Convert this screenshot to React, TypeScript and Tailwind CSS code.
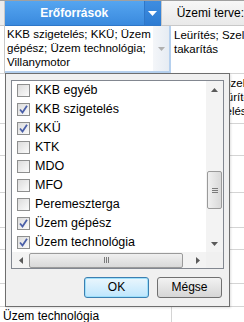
import { Fragment } from 'react';

const items = [
    { label: 'KKB egyéb', checked: false },
    { label: 'KKB szigetelés', checked: true },
    { label: 'KKÜ', checked: true },
    { label: 'KTK', checked: false },
    { label: 'MDO', checked: false },
    { label: 'MFO', checked: false },
    { label: 'Peremeszterga', checked: false },
    { label: 'Üzem gépész', checked: true },
    { label: 'Üzem technológia', checked: true },
];

const Check = ({ checked }: { checked: boolean }) => (
    <span className="flex h-[13px] w-[13px] shrink-0 items-center justify-center border border-[#8e8f8f] bg-gradient-to-br from-[#dcdcdc] to-[#fbfbfb]">
        {checked && (
            <svg width="9" height="9" viewBox="0 0 9 9">
                <path d="M1 4.5 L3.5 7.5 L8 0.8" fill="none" stroke="#4a5fa8" strokeWidth="1.8" />
            </svg>
        )}
    </span>
);

const Arrow = ({ dir }: { dir: 'up' | 'down' | 'left' | 'right' }) => {
    const d = {
        up: 'M0 4 L3.5 0 L7 4 Z',
        down: 'M0 0 L7 0 L3.5 4 Z',
        left: 'M4 0 L4 7 L0 3.5 Z',
        right: 'M0 0 L0 7 L4 3.5 Z',
    }[dir];
    const vert = dir === 'up' || dir === 'down';
    return (
        <svg width={vert ? 7 : 4} height={vert ? 4 : 7} viewBox={vert ? '0 0 7 4' : '0 0 4 7'}>
            <path d={d} fill="#5a5a5a" />
        </svg>
    );
};

const Grip = ({ vertical }: { vertical: boolean }) => (
    <span className={vertical ? 'flex flex-col gap-[1px]' : 'flex gap-[1px]'}>
        {[0, 1, 2].map((i) => (
            <span key={i} className={vertical ? 'h-[1px] w-[6px] bg-[#7a7a7a]' : 'h-[6px] w-[1px] bg-[#7a7a7a]'} />
        ))}
    </span>
);

const App = () => {
    return (
        <div
            className="relative h-[322px] w-[244px] overflow-hidden bg-white text-[11px] leading-[14px] text-black"
            style={{ fontFamily: '"Liberation Sans", Arial, sans-serif' }}
        >
            {/* header */}
            <div className="flex h-[26px] border-t border-[#a0a0a0]">
                <div className="w-[5px] border-b border-r border-[#c8c8c8] bg-[#ececec]" />
                <div className="flex w-[148px] items-center justify-center border-b border-[#2f77c8] bg-gradient-to-b from-[#55a5f0] to-[#3a8ade] text-[12px] font-bold text-white">
                    Erőforrások
                </div>
                <div className="flex w-[18px] items-center justify-center border-b border-l border-[#2f77c8] bg-gradient-to-b from-[#3f8de0] to-[#2c7bd2]">
                    <svg width="9" height="5" viewBox="0 0 9 5">
                        <path d="M0 0 L9 0 L4.5 5 Z" fill="#fff" />
                    </svg>
                </div>
                <div className="flex flex-1 items-center border-b border-l border-[#c8c8c8] bg-gradient-to-b from-[#f7f7f7] to-[#e9e9e9] pl-[15px] text-[12px] whitespace-nowrap">
                    Üzemi terve:
                </div>
            </div>

            {/* first row */}
            <div className="flex h-[47px]">
                <div className="w-[5px] border-r border-[#c8c8c8]" />
                <div className="flex w-[166px] border-r-2 border-b-2 border-[#b5d0ee]">
                    <div className="flex-1 overflow-hidden pl-[2px] pt-[1px] text-[11.5px] whitespace-nowrap">
                        KKB szigetelés; KKÜ; Üzem
                        <br />
                        gépész; Üzem technológia;
                        <br />
                        Villanymotor
                    </div>
                    <div className="flex w-[16px] items-center justify-center bg-gradient-to-r from-[#f4f6f9] to-[#e6ecf3]">
                        <svg width="7" height="4" viewBox="0 0 7 4">
                            <path d="M0 0 L7 0 L3.5 4 Z" fill="#b0b0b0" />
                        </svg>
                    </div>
                </div>
                <div className="flex-1 overflow-hidden pl-[3px] pt-[2px] text-[11.5px] whitespace-nowrap">
                    Leürítés; Szellőzés
                    <br />
                    takarítás
                </div>
            </div>

            {/* rows behind the popup */}
            <div className="flex h-[50px] border-t border-[#d4d4d4]">
                <div className="w-[5px]" />
                <div className="w-[167px] border-r border-[#d4d4d4]" />
                <div className="flex-1 overflow-hidden pl-[3px] pt-[2px] text-[11.5px] whitespace-nowrap">
                    Leürítés; Szellőzés
                    <br />
                    Kenés; Leürítés
                    <br />
                    Anyagkezelés
                </div>
            </div>
            {[32, 37, 35, 22, 34, 23].map((h, i) => (
                <div key={i} className="flex border-t border-[#d4d4d4]" style={{ height: h }}>
                    <div className="w-[5px]" />
                    <div className="w-[167px] border-r border-[#d4d4d4]" />
                    <div className="flex-1" />
                </div>
            ))}
            <div className="flex h-[20px] border-t border-[#d4d4d4]">
                <div className="w-[172px] border-r border-[#d4d4d4] pl-[3px] pt-[2px] text-[12px] whitespace-nowrap">Üzem technológia</div>
                <div className="flex-1" />
            </div>

            {/* popup */}
            <div className="absolute left-[5px] top-[73px] flex h-[234px] w-[225px] flex-col border border-[#6e6e6e] bg-[#f0f0f0] text-[12px] leading-[15px] shadow-[1px_1px_2px_rgba(0,0,0,0.12)]">
                <div className="mx-[5px] mt-[6px] flex h-[189px] flex-col border border-[#828790] bg-white">
                    <div className="flex flex-1">
                        <div className="flex flex-1 flex-col">
                            {items.map((it) => (
                                <Fragment key={it.label}>
                                    <div className="flex h-[19px] items-center gap-[5px] pl-[5px] text-[12.5px] whitespace-nowrap">
                                        <Check checked={it.checked} />
                                        <span>{it.label}</span>
                                    </div>
                                </Fragment>
                            ))}
                        </div>
                        <div className="flex w-[17px] flex-col items-center bg-[#f3f3f3]">
                            <div className="flex h-[17px] w-full items-center justify-center">
                                <Arrow dir="up" />
                            </div>
                            <div className="flex-1" />
                            <div className="flex h-[38px] w-[15px] items-center justify-center rounded-[2px] border border-[#9a9a9a] bg-gradient-to-r from-[#f0f0f0] to-[#d9d9d9]">
                                <Grip vertical />
                            </div>
                            <div className="h-[26px]" />
                            <div className="flex h-[17px] w-full items-center justify-center">
                                <Arrow dir="down" />
                            </div>
                        </div>
                    </div>
                    <div className="flex h-[17px] items-center bg-[#f3f3f3]">
                        <div className="flex w-[17px] items-center justify-center">
                            <Arrow dir="left" />
                        </div>
                        <div className="flex h-[15px] w-[154px] items-center justify-center rounded-[2px] border border-[#9a9a9a] bg-gradient-to-b from-[#f0f0f0] to-[#d9d9d9]">
                            <Grip vertical={false} />
                        </div>
                        <div className="flex-1" />
                        <div className="flex w-[17px] items-center justify-center">
                            <Arrow dir="right" />
                        </div>
                        <div className="w-[17px] self-stretch bg-[#f0f0f0]" />
                    </div>
                </div>
                <div className="mt-[8px] flex justify-end gap-[8px] pr-[7px]">
                    <button className="h-[21px] w-[65px] rounded-[3px] border border-[#3c7fb1] bg-gradient-to-b from-[#eaf6fd] to-[#bee6fd] shadow-[inset_0_0_0_1px_#9ee0fb]">
                        OK
                    </button>
                    <button className="h-[21px] w-[65px] rounded-[3px] border border-[#707070] bg-gradient-to-b from-[#f2f2f2] to-[#d6d6d6]">
                        Mégse
                    </button>
                </div>
            </div>
        </div>
    );
};

export default App;
